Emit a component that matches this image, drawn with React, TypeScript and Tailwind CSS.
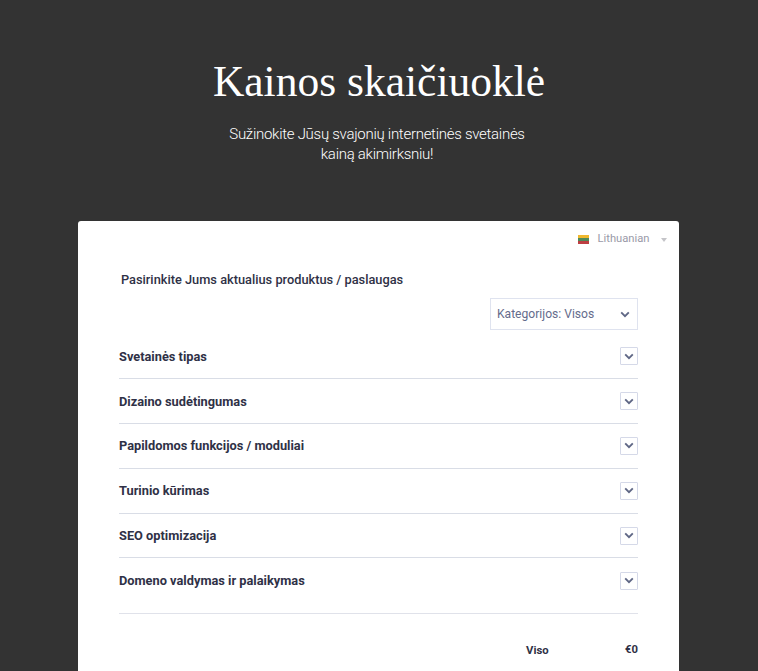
import React from "react";

const rows = [
  "Svetainės tipas",
  "Dizaino sudėtingumas",
  "Papildomos funkcijos / moduliai",
  "Turinio kūrimas",
  "SEO optimizacija",
  "Domeno valdymas ir palaikymas",
];

function Chevron({ className }: { className?: string }) {
  return (
    <svg viewBox="0 0 10 7" className={className} fill="none">
      <path d="M1.2 1.4 5 5.1 8.8 1.4" stroke="#5f6785" strokeWidth="1.9" />
    </svg>
  );
}

export default function App() {
  return (
    <div className="h-[671px] overflow-hidden bg-[#333333] font-['Roboto',sans-serif]">
      <header className="flex flex-col items-center pt-[52px] text-center">
        <h1 className="font-['Liberation_Serif',serif] text-[43.5px] leading-[58px] text-white">Kainos skaičiuoklė</h1>
        <p className="mt-[15px] pr-[4px] text-[15px] leading-[19.5px] font-light tracking-[-0.28px] text-white">
          Sužinokite Jūsų svajonių internetinės svetainės
          <br />
          kainą akimirksniu!
        </p>
      </header>
      <main className="mt-[57px] ml-[78px] w-[601px] rounded-t-[3px] bg-white pb-10">
        <div className="flex h-[35px] items-center justify-end pt-[2px] pr-[12.5px]">
          <svg viewBox="0 0 11 9" className="h-[9px] w-[11px]">
            <rect width="11" height="3" fill="#f0b82e" />
            <rect y="3" width="11" height="3" fill="#4f8a5a" />
            <rect y="6" width="11" height="3" fill="#bd3f42" />
          </svg>
          <span className="ml-[9px] text-[11.2px] text-[#9a9aa8]">Lithuanian</span>
          <span className="ml-[11px] h-0 w-0 border-x-[3.5px] border-t-[4px] border-x-transparent border-t-[#c4c4c8]" />
        </div>
        <div className="pr-[41px] pl-[41px]">
          <h2 className="mt-[15px] pl-[2px] text-[12.8px] leading-[18px] font-medium text-[#2f3146]">
            Pasirinkite Jums aktualius produktus / paslaugas
          </h2>
          <div className="mt-[9px] flex justify-end">
            <div className="flex h-[32px] w-[148px] items-center justify-between border border-[#dfe3ef] pr-[7px] pl-[6px]">
              <span className="text-[12.1px] text-[#656c8c]">Kategorijos: Visos</span>
              <Chevron className="h-[7px] w-[10px]" />
            </div>
          </div>
          <div className="mt-[4.5px]">
            {rows.map((r, i) => (
              <div
                key={r}
                className={`flex h-[44.8px] items-center justify-between ${i < 5 ? "border-b border-[#d9dde6]" : ""}`}
              >
                <span className="text-[12.8px] font-bold text-[#2f3146]">{r}</span>
                <span className="flex h-[18px] w-[18px] items-center justify-center rounded-[1px] border border-[#d5d9e8]">
                  <Chevron className="h-[7px] w-[10px]" />
                </span>
              </div>
            ))}
          </div>
          <div className="mt-[9.5px] border-t border-[#e0e2ea] pt-[28px]">
            <div className="flex justify-end text-[11.3px] font-bold text-[#2f3146]">
              <span className="w-[99px] pt-[1px]">Viso</span>
              <span>€0</span>
            </div>
          </div>
        </div>
      </main>
    </div>
  );
}
